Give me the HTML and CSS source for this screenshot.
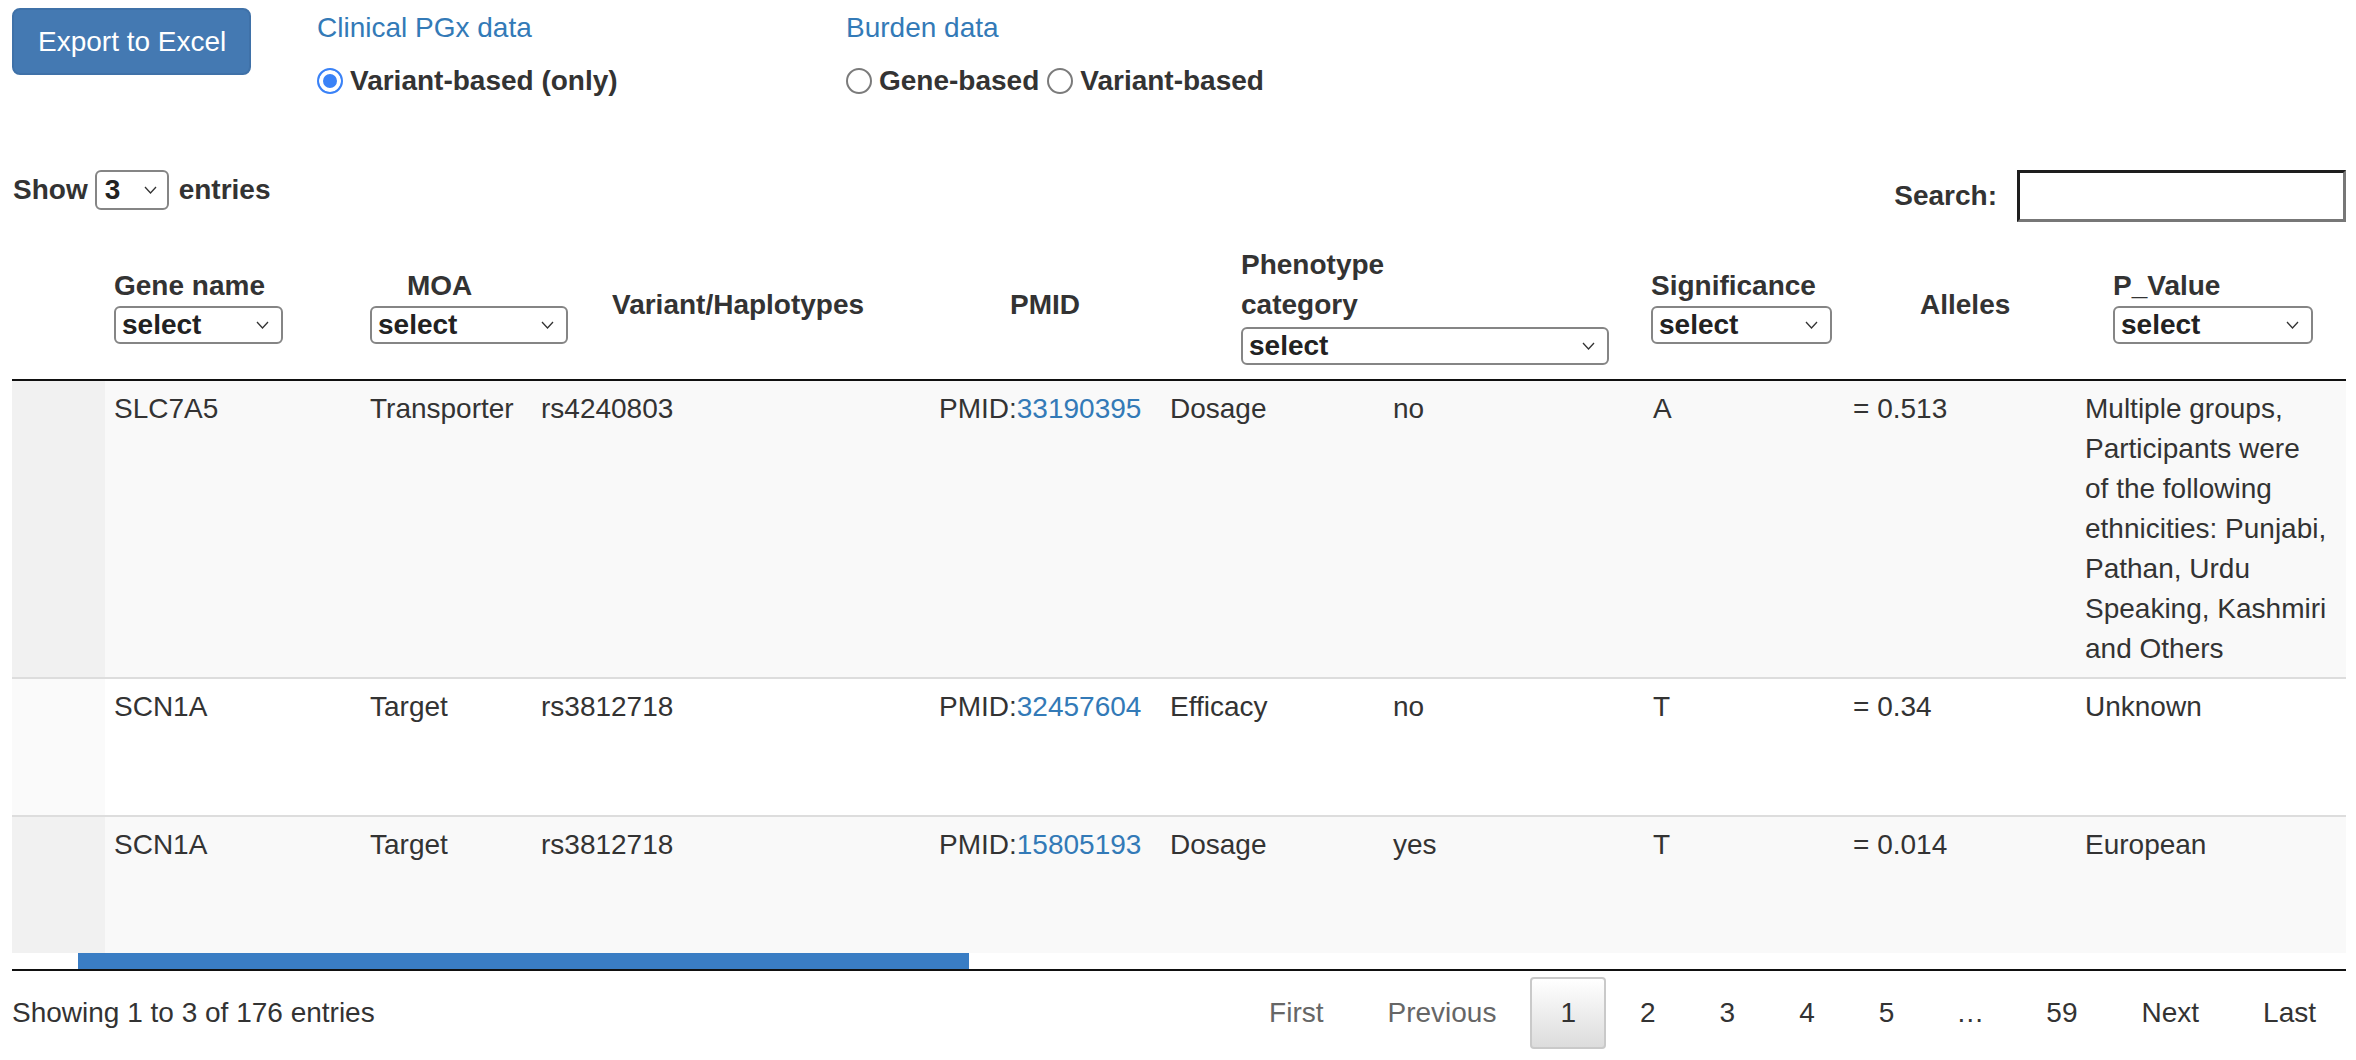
FILE: index.html
```html
<!DOCTYPE html>
<html>
<head>
<meta charset="utf-8">
<title>Clinical PGx data</title>
<link rel="stylesheet" href="styles.css">
</head>
<body>
<div class="page">
  <div class="top">
    <button class="btn-export">Export to Excel</button>
    <div class="group clinical">
      <div class="group-title">Clinical PGx data</div>
      <div class="radios">
        <label class="radio"><input type="radio" name="clin" checked><span>Variant-based (only)</span></label>
      </div>
    </div>
    <div class="group burden">
      <div class="group-title">Burden data</div>
      <div class="radios">
        <label class="radio"><input type="radio" name="burden"><span>Gene-based</span></label>
        <label class="radio"><input type="radio" name="burden"><span>Variant-based</span></label>
      </div>
    </div>
  </div>

  <div class="controls">
    <div class="length">
      <span>Show</span>
      <div class="sel sel-len"><span>3</span><svg class="chev" width="13" height="8" viewBox="0 0 13 8"><path d="M1 1 L6.5 7 L12 1" fill="none" stroke="#333" stroke-width="1.3"/></svg></div>
      <span>entries</span>
    </div>
    <div class="search">
      <span>Search:</span>
      <input type="text" class="search-input">
    </div>
  </div>

  <table class="head-table">
    <colgroup>
      <col class="hc0"><col class="hc1"><col class="hc2"><col class="hc3"><col class="hc4"><col class="hc5"><col class="hc6"><col class="hc7"><col class="hc8">
    </colgroup>
    <thead>
      <tr>
        <th></th>
        <th><div class="th-label">Gene name</div><div class="sel sel-gene"><span>select</span><svg class="chev" width="13" height="8" viewBox="0 0 13 8"><path d="M1 1 L6.5 7 L12 1" fill="none" stroke="#333" stroke-width="1.3"/></svg></div></th>
        <th><div class="th-label moa">MOA</div><div class="sel sel-moa"><span>select</span><svg class="chev" width="13" height="8" viewBox="0 0 13 8"><path d="M1 1 L6.5 7 L12 1" fill="none" stroke="#333" stroke-width="1.3"/></svg></div></th>
        <th><div class="th-label">Variant/Haplotypes</div></th>
        <th><div class="th-label">PMID</div></th>
        <th><div class="th-label">Phenotype<br>category</div><div class="sel sel-phen"><span>select</span><svg class="chev" width="13" height="8" viewBox="0 0 13 8"><path d="M1 1 L6.5 7 L12 1" fill="none" stroke="#333" stroke-width="1.3"/></svg></div></th>
        <th><div class="th-label">Significance</div><div class="sel sel-sig"><span>select</span><svg class="chev" width="13" height="8" viewBox="0 0 13 8"><path d="M1 1 L6.5 7 L12 1" fill="none" stroke="#333" stroke-width="1.3"/></svg></div></th>
        <th><div class="th-label">Alleles</div></th>
        <th><div class="th-label">P_Value</div><div class="sel sel-pval"><span>select</span><svg class="chev" width="13" height="8" viewBox="0 0 13 8"><path d="M1 1 L6.5 7 L12 1" fill="none" stroke="#333" stroke-width="1.3"/></svg></div></th>
      </tr>
    </thead>
  </table>

  <div class="scroll-body">
    <table class="body-table">
      <colgroup>
        <col class="bc0"><col class="bc1"><col class="bc2"><col class="bc3"><col class="bc4"><col class="bc5"><col class="bc6"><col class="bc7"><col class="bc8"><col class="bc9">
      </colgroup>
      <tbody>
        <tr class="odd">
          <td class="sort"></td>
          <td>SLC7A5</td>
          <td>Transporter</td>
          <td>rs4240803</td>
          <td>PMID:<a href="#">33190395</a></td>
          <td>Dosage</td>
          <td>no</td>
          <td>A</td>
          <td>= 0.513</td>
          <td class="pop">Multiple groups, Participants were of the following ethnicities: Punjabi, Pathan, Urdu Speaking, Kashmiri and Others</td>
        </tr>
        <tr class="even short">
          <td class="sort"></td>
          <td>SCN1A</td>
          <td>Target</td>
          <td>rs3812718</td>
          <td>PMID:<a href="#">32457604</a></td>
          <td>Efficacy</td>
          <td>no</td>
          <td>T</td>
          <td>= 0.34</td>
          <td class="pop">Unknown</td>
        </tr>
        <tr class="odd short">
          <td class="sort"></td>
          <td>SCN1A</td>
          <td>Target</td>
          <td>rs3812718</td>
          <td>PMID:<a href="#">15805193</a></td>
          <td>Dosage</td>
          <td>yes</td>
          <td>T</td>
          <td>= 0.014</td>
          <td class="pop">European</td>
        </tr>
      </tbody>
    </table>
  </div>
  <div class="hscroll"><div class="thumb"></div></div>

  <div class="footer">
    <div class="info">Showing 1 to 3 of 176 entries</div>
    <div class="pagination">
      <a class="pg disabled">First</a>
      <a class="pg disabled">Previous</a>
      <a class="pg current">1</a>
      <a class="pg">2</a>
      <a class="pg">3</a>
      <a class="pg">4</a>
      <a class="pg">5</a>
      <span class="ellipsis">…</span>
      <a class="pg">59</a>
      <a class="pg">Next</a>
      <a class="pg">Last</a>
    </div>
  </div>
</div>
</body>
</html>
```

FILE: styles.css
```css
html, body {
  margin: 0;
  padding: 0;
  background: #fff;
}
body {
  font-family: "Liberation Sans", Arial, Helvetica, sans-serif;
  font-size: 28px;
  line-height: 40px;
  color: #333;
}
.page {
  padding: 8px 10px 0 12px;
}

/* top bar */
.top {
  display: flex;
  align-items: flex-start;
}
.btn-export {
  font-family: inherit;
  font-size: 28px;
  line-height: 40px;
  color: #fff;
  background: #4479b2;
  border: 2px solid #3f71a8;
  border-radius: 8px;
  padding: 12px 24px;
  margin: 0;
  width: 239px;
  height: 67px;
  box-sizing: border-box;
  white-space: nowrap;
}
.group.clinical {
  margin-left: 66px;
  width: 529px;
}
.group-title {
  color: #337ab7;
  margin-bottom: 13px;
}
.radios {
  display: flex;
  align-items: center;
  gap: 8px;
  font-weight: bold;
}
.radio {
  display: flex;
  align-items: center;
  gap: 7px;
}
.radio input {
  -webkit-appearance: none;
  appearance: none;
  margin: 0;
  width: 26px;
  height: 26px;
  border: 2px solid #7b7b7b;
  border-radius: 50%;
  background: #fff;
  box-sizing: border-box;
}
.radio input:checked {
  border-color: #3a82f7;
  background: #3a82f7;
  box-shadow: inset 0 0 0 4px #fff;
}

/* controls */
.controls {
  display: flex;
  justify-content: space-between;
  align-items: flex-start;
  margin-top: 69px;
  font-weight: bold;
}
.length {
  display: flex;
  align-items: center;
  padding-left: 1px;
}
.search {
  display: flex;
  align-items: center;
  gap: 20px;
}
.search-input {
  width: 329px;
  height: 52px;
  box-sizing: border-box;
  margin: 0;
  border-style: solid;
  border-width: 3px;
  border-color: #1e1e1e #777 #777 #1e1e1e;
  background: #fff;
}

/* fake selects */
.sel {
  display: flex;
  align-items: center;
  justify-content: space-between;
  box-sizing: border-box;
  height: 38px;
  border: 2px solid #858585;
  border-radius: 6px;
  background: #fff;
  padding: 0 12px 0 6px;
  font-weight: bold;
  color: #222;
  line-height: 34px;
}
.sel-len {
  width: 74px;
  height: 40px;
  margin: 0 10px 0 7px;
  padding: 0 10px 0 8px;
}
.sel-gene { width: 169px; }
.sel-moa { width: 198px; }
.sel-phen { width: 368px; margin-top: 2px; }
.sel-sig { width: 181px; }
.sel-pval { width: 200px; }
.chev { display: block; }

/* header table */
.head-table {
  width: 100%;
  table-layout: fixed;
  border-collapse: collapse;
  margin-top: 9px;
  border-bottom: 2px solid #111;
}
.head-table th {
  padding: 14px 0;
  text-align: left;
  vertical-align: middle;
  font-weight: bold;
}
.th-label.moa { padding-left: 37px; }
.hc0 { width: 102px; }
.hc1 { width: 256px; }
.hc2 { width: 242px; }
.hc3 { width: 398px; }
.hc4 { width: 231px; }
.hc5 { width: 410px; }
.hc6 { width: 269px; }
.hc7 { width: 193px; }
.hc8 { width: 233px; }

/* body table */
.body-table {
  width: 100%;
  table-layout: fixed;
  border-collapse: separate;
  border-spacing: 0;
}
.body-table td {
  padding: 8px 9px;
  vertical-align: top;
  text-align: left;
}
.body-table tr.short { height: 138px; }
.body-table tr.short td { border-top: 2px solid #dddddd; }
.body-table tr.odd td { background: #f9f9f9; }
.body-table tr.odd td.sort { background: #f1f1f1; }
.body-table tr.even td { background: #fff; }
.body-table tr.even td.sort { background: #fafafa; }
.body-table td.pop { padding-right: 17px; }
.body-table a { color: #337ab7; text-decoration: none; }
.bc0 { width: 93px; }
.bc1 { width: 256px; }
.bc2 { width: 171px; }
.bc3 { width: 398px; }
.bc4 { width: 231px; }
.bc5 { width: 223px; }
.bc6 { width: 260px; }
.bc7 { width: 200px; }
.bc8 { width: 232px; }
.bc9 { width: 270px; }

/* horizontal scrollbar */
.hscroll {
  height: 16px;
  border-bottom: 2px solid #111;
}
.thumb {
  margin-left: 66px;
  width: 891px;
  height: 16px;
  background: #3a7dc4;
}

/* footer */
.footer {
  display: flex;
  justify-content: space-between;
  align-items: center;
  padding-top: 6px;
}
.pagination {
  display: flex;
  align-items: center;
  gap: 4px;
}
.pg {
  display: block;
  padding: 14px 28px;
  border: 2px solid transparent;
  border-radius: 4px;
  color: #333;
  text-align: center;
}
.pg.disabled { color: #666; }
.pg.current {
  border-color: #c9c9c9;
  background: linear-gradient(to bottom, #ffffff 0%, #dcdcdc 100%);
}
.ellipsis {
  padding: 0 28px;
  color: #333;
}
```
